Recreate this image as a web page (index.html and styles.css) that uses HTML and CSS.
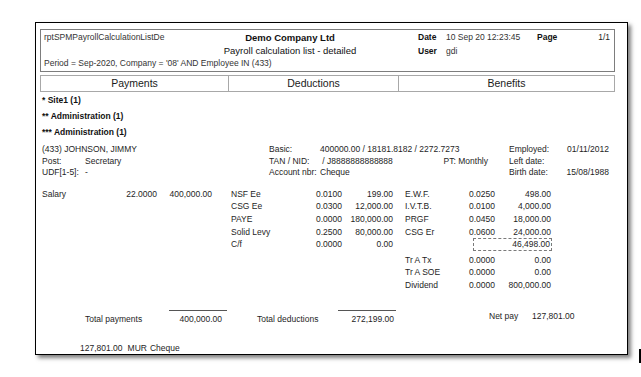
FILE: index.html
```html
<!DOCTYPE html>
<html>
<head>
<meta charset="utf-8">
<link rel="stylesheet" href="styles.css">
</head>
<body>
<div class="page">
  <div class="hdr">
    <div class="h-name">rptSPMPayrollCalculationListDe</div>
    <div class="h-title">Demo Company Ltd</div>
    <div class="h-lab">Date</div>
    <div class="h-val">10 Sep 20 12:23:45</div>
    <div class="h-page"><b>Page</b><span>1/1</span></div>
    <div class="h-sub">Payroll calculation list - detailed</div>
    <div class="h-lab">User</div>
    <div class="h-val">gdi</div>
    <div class="h-period">Period = Sep-2020, Company = '08' AND Employee IN (433)</div>
  </div>

  <div class="cols">
    <div class="col">Payments</div>
    <div class="col sep">Deductions</div>
    <div class="col sep">Benefits</div>
  </div>

  <div class="grp">* Site1 (1)</div>
  <div class="grp">** Administration (1)</div>
  <div class="grp">*** Administration (1)</div>

  <div class="emp">
    <div class="e-span">(433) JOHNSON, JIMMY</div>
    <div class="e-lab2">Basic:</div>
    <div class="e-val2">400000.00 / 18181.8182 / 2272.7273</div>
    <div></div>
    <div class="e-lab3">Employed:</div>
    <div class="e-val3">01/11/2012</div>

    <div>Post:</div>
    <div>Secretary</div>
    <div class="e-lab2">TAN / NID:</div>
    <div class="e-val2 e-tan"><span>&nbsp;/ J8888888888888</span><span>PT: Monthly</span></div>
    <div></div>
    <div class="e-lab3">Left date:</div>
    <div class="e-val3"></div>

    <div>UDF[1-5]:</div>
    <div>-</div>
    <div class="e-lab2">Account nbr:</div>
    <div class="e-val2">Cheque</div>
    <div></div>
    <div class="e-lab3">Birth date:</div>
    <div class="e-val3">15/08/1988</div>
  </div>

  <div class="data">
    <div class="blk pay">
      <div class="lab">Salary</div><div class="num">22.0000</div><div class="num">400,000.00</div>
    </div>
    <div class="blk ded">
      <div class="lab">NSF Ee</div><div class="num">0.0100</div><div class="num">199.00</div>
      <div class="lab">CSG Ee</div><div class="num">0.0300</div><div class="num">12,000.00</div>
      <div class="lab">PAYE</div><div class="num">0.0000</div><div class="num">180,000.00</div>
      <div class="lab">Solid Levy</div><div class="num">0.2500</div><div class="num">80,000.00</div>
      <div class="lab">C/f</div><div class="num">0.0000</div><div class="num">0.00</div>
    </div>
    <div class="blk ben">
      <div class="lab">E.W.F.</div><div class="num">0.0250</div><div class="num">498.00</div>
      <div class="lab">I.V.T.B.</div><div class="num">0.0100</div><div class="num">4,000.00</div>
      <div class="lab">PRGF</div><div class="num">0.0450</div><div class="num">18,000.00</div>
      <div class="lab">CSG Er</div><div class="num">0.0600</div><div class="num">24,000.00</div>
      <div class="lab"></div><div class="subtot">46,498.00</div>
      <div class="lab">Tr A Tx</div><div class="num">0.0000</div><div class="num">0.00</div>
      <div class="lab">Tr A SOE</div><div class="num">0.0000</div><div class="num">0.00</div>
      <div class="lab">Dividend</div><div class="num">0.0000</div><div class="num">800,000.00</div>
    </div>
  </div>

  <div class="tot">
    <div class="t-sp1"></div>
    <div class="t-lab t-w1">Total payments</div>
    <div class="t-amt t-a1">400,000.00</div>
    <div class="t-sp2"></div>
    <div class="t-lab t-w2">Total deductions</div>
    <div class="t-amt t-a2">272,199.00</div>
    <div class="t-sp3"></div>
    <div class="t-net t-w3">Net pay</div>
    <div class="t-net">127,801.00</div>
  </div>

  <div class="foot"><span>127,801.00</span><span class="f-cur">MUR</span><span>Cheque</span></div>
</div>
<div class="caret"></div>
</body>
</html>
```

FILE: styles.css
```css
html, body {
  margin: 0;
  padding: 0;
  background: #ffffff;
}
body {
  position: relative;
  width: 641px;
  height: 377px;
  overflow: hidden;
  font-family: "Liberation Sans", Arial, sans-serif;
  font-size: 8.5px;
  color: #1e1e1e;
}
.page {
  box-sizing: border-box;
  margin: 22px 0 0 35px;
  width: 593px;
  height: 333px;
  border: 1px solid #000;
  box-shadow: 3px 3px 4px rgba(0, 0, 0, 0.5);
  padding: 6px 12px 0 4px;
  background: #fff;
}
.hdr {
  box-sizing: border-box;
  height: 43px;
  border: 1px solid #7d7d7d;
  padding: 0 3px 3px 3px;
  display: grid;
  grid-template-columns: 126px 240px 8px 28px 91px 73px;
  grid-template-rows: 14px 13px 11px;
  align-items: center;
}
.h-name { grid-column: 1; color: #333; }
.h-title { grid-column: 2; text-align: center; font-weight: bold; font-size: 9.5px; color: #111; }
.h-sub { grid-column: 2; text-align: center; font-size: 9.5px; color: #111; }
.h-lab { grid-column: 4; font-weight: bold; color: #111; }
.h-val { grid-column: 5; color: #333; }
.h-page { grid-column: 6; display: flex; justify-content: space-between; }
.h-page b { color: #111; }
.h-period { grid-column: 1 / -1; color: #333; }

.cols {
  box-sizing: border-box;
  margin-top: 3px;
  height: 17px;
  border: 1px solid #a8a8a8;
  display: grid;
  grid-template-columns: 187px 170px 1fr;
}
.col {
  font-size: 10.5px;
  line-height: 15px;
  text-align: center;
  color: #1a1a1a;
}
.col.sep { border-left: 1px solid #a8a8a8; }

.grp {
  padding-left: 2px;
  line-height: 16px;
  font-weight: bold;
  color: #111;
}

.emp {
  margin-top: 4px;
  padding-left: 2px;
  display: grid;
  grid-template-columns: 43px 184px 51px 168px 21px 56px 44px;
  grid-auto-rows: 11.5px;
  line-height: 11.5px;
  white-space: nowrap;
}
.e-span { grid-column: 1 / 3; }
.e-lab2 { grid-column: 3; }
.e-val2 { grid-column: 4; }
.e-lab3 { grid-column: 6; }
.e-val3 { grid-column: 7; text-align: right; }
.e-tan { display: flex; justify-content: space-between; }

.data {
  margin-top: 9px;
  padding-left: 2px;
  display: flex;
  align-items: flex-start;
  white-space: nowrap;
}
.blk {
  display: grid;
  grid-auto-rows: 12.7px;
  line-height: 12.7px;
}
.pay { grid-template-columns: 81px 34px 55px; }
.ded { grid-template-columns: 88px 42px 51px; }
.ded .lab { padding-left: 19px; }
.ben {
  grid-template-columns: 62px 40px 56px;
  grid-template-rows: repeat(4, 12.7px) 15.5px repeat(3, 12.7px);
}
.ben .lab { padding-left: 12px; }
.num { text-align: right; }
.subtot {
  grid-column: 2 / 4;
  align-self: start;
  margin-left: 18px;
  margin-right: -1px;
  border: 1px dashed #7a7a7a;
  line-height: 11px;
  text-align: right;
  padding-right: 1px;
}

.tot {
  margin-top: 18px;
  display: flex;
  align-items: flex-start;
  white-space: nowrap;
}
.t-sp1 { width: 45px; }
.t-sp2 { width: 30px; }
.t-sp3 { width: 93px; }
.t-w1 { width: 84px; }
.t-w2 { width: 81px; }
.t-w3 { width: 43px; }
.t-lab { padding-top: 3px; line-height: 12px; }
.t-amt {
  width: 58px;
  box-sizing: border-box;
  border-top: 1px solid #555;
  padding-top: 2px;
  line-height: 12px;
  text-align: right;
}
.t-a1 { padding-right: 5px; }
.t-a2 { padding-right: 2px; }
.t-net { line-height: 13px; }

.foot {
  margin-top: 17px;
  padding-left: 40px;
  line-height: 12px;
  white-space: nowrap;
}
.foot span { margin-right: 4px; }
.foot .f-cur { margin-left: 1px; margin-right: 3px; }

.caret {
  position: absolute;
  left: 639px;
  top: 349px;
  width: 2px;
  height: 14px;
  background: #000;
}
```
